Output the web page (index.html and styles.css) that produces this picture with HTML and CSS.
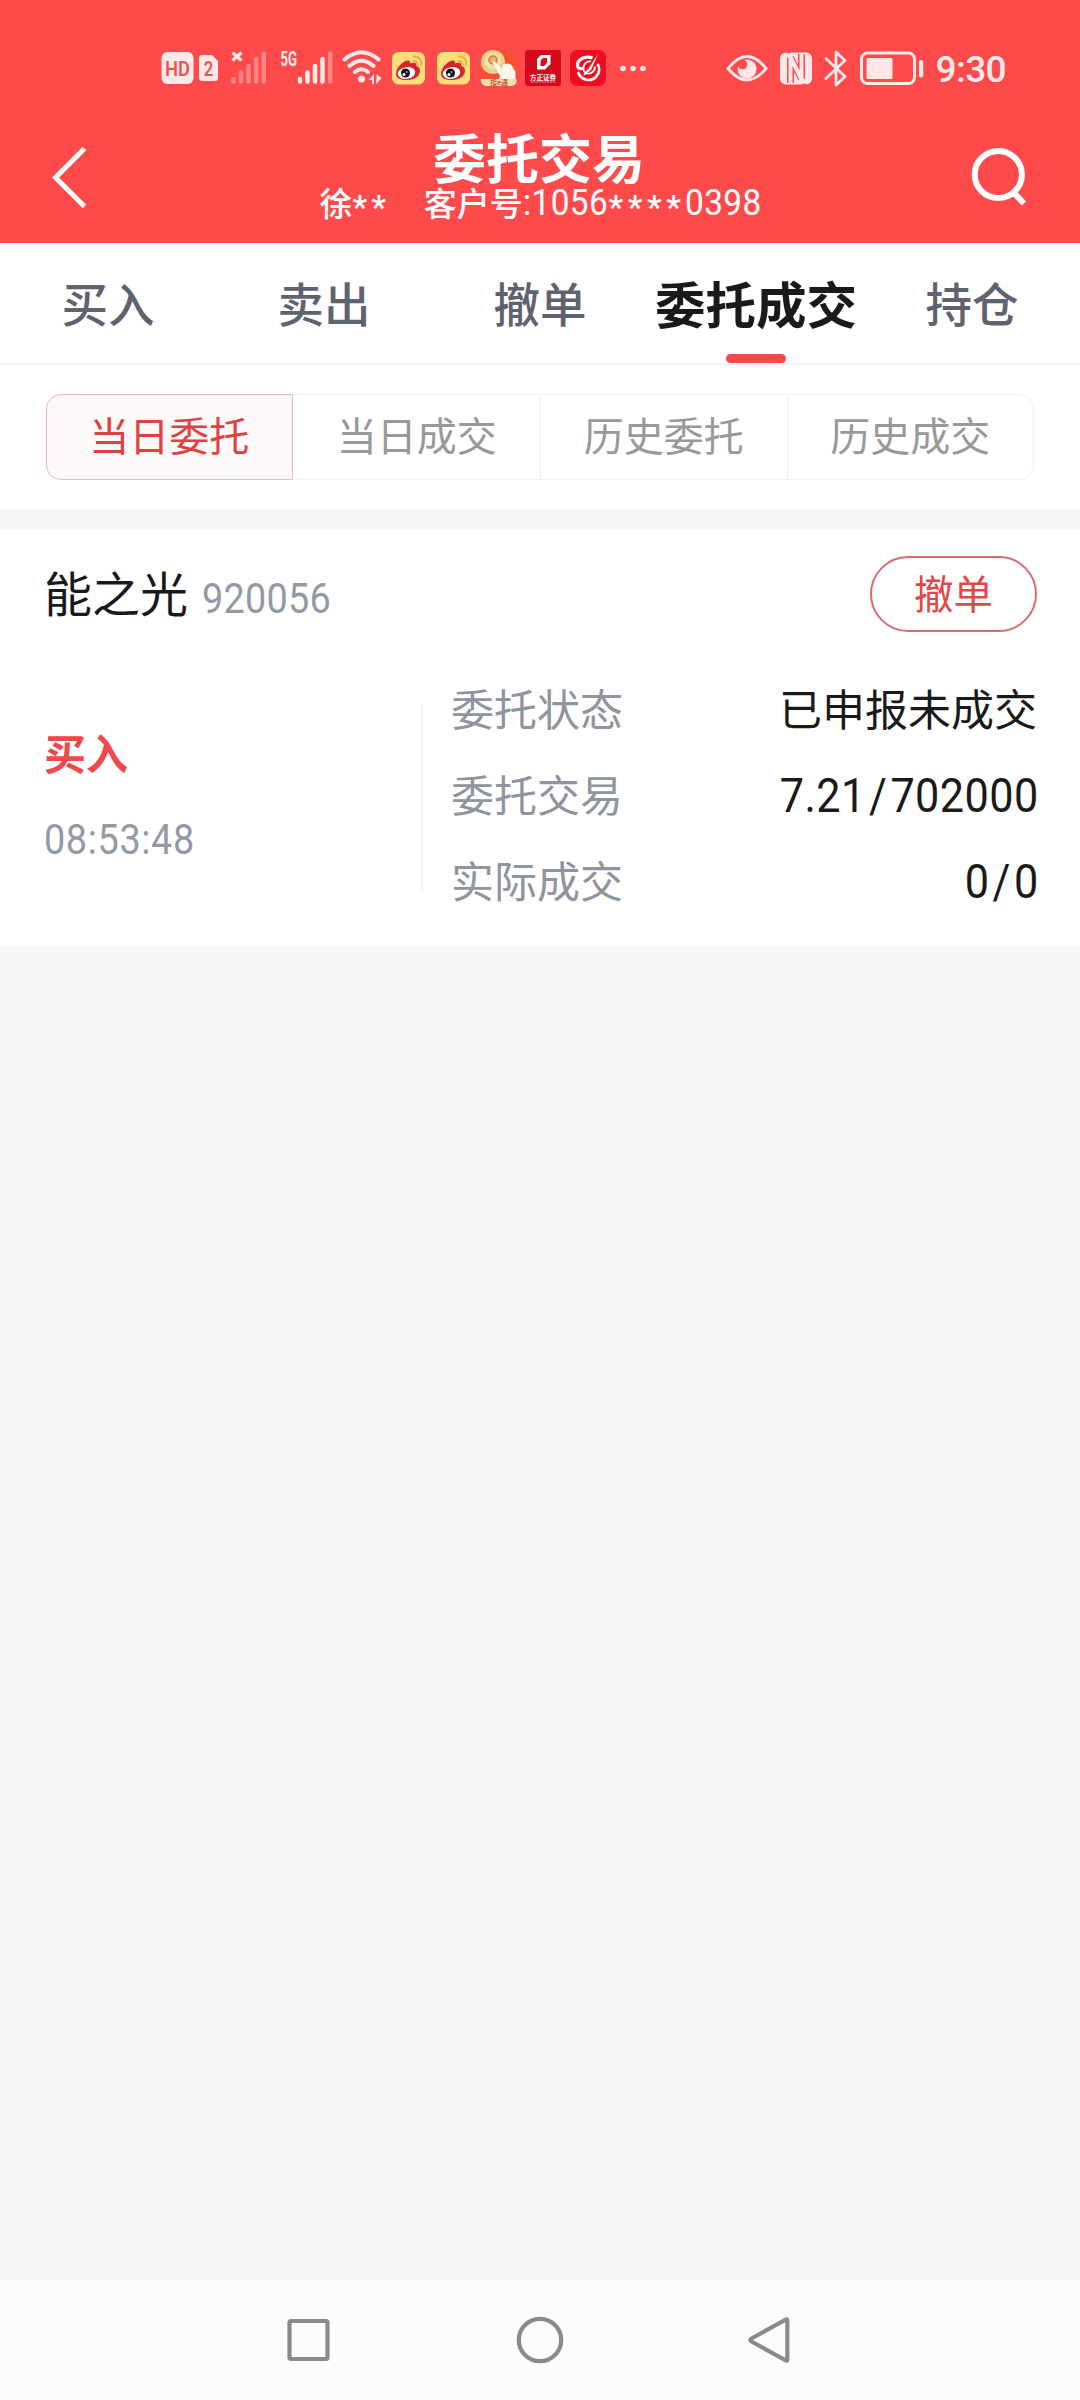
FILE: index.html
```html
<!DOCTYPE html>
<html lang="zh-CN">
<head>
<meta charset="utf-8">
<title>委托交易</title>
<link rel="stylesheet" href="styles.css">
</head>
<body>
<div class="screen">
  <header class="top">
    <div class="status">
      <div class="status-left">
        <svg width="58" height="40" viewBox="0 0 58 40">
          <rect x="1.5" y="4" width="32" height="32" rx="6" fill="#ffe9e8"/>
          <text x="17.5" y="27.5" class="svg-badge" font-size="21" textLength="25" lengthAdjust="spacingAndGlyphs">HD</text>
          <path d="M42 7h10l6 6v17a3 3 0 0 1-3 3H42a3 3 0 0 1-3-3V10a3 3 0 0 1 3-3z" fill="#ffe9e8"/>
          <text x="48.5" y="27.5" class="svg-badge" font-size="21" textLength="9.5" lengthAdjust="spacingAndGlyphs">2</text>
        </svg>
        <svg class="gap-signal" width="36" height="40" viewBox="0 0 36 40">
          <path d="M1.5 4.500l9 8M10.500 4.500l-9 8" stroke="#ffe9e8" stroke-width="3.200" fill="none"/>
          <g stroke="#ff8685" stroke-width="4.500" stroke-linecap="round"><path d="M2.500 31v2.500M10 24.500v9M17.500 18v15.500M25.200 11v22.500M32.800 5.500v28"/></g>
        </svg>
        <svg class="gap-signal" width="54" height="40" viewBox="0 0 54 40">
          <text x="0.500" y="17.500" class="svg-net" font-size="20" textLength="16.500" lengthAdjust="spacingAndGlyphs">5G</text>
          <g stroke="#ffe9e8" stroke-width="4.500" stroke-linecap="round"><path d="M20 31v2.500M27.500 24.500v9M35 18v15.500M42.500 11v22.500"/><path stroke="#ff8685" d="M50.200 5.500v28"/></g>
        </svg>
        <svg class="gap-wifi" width="40" height="40" viewBox="0 0 40 40">
          <g fill="none" stroke="#ffe9e8" stroke-width="4" stroke-linecap="round"><path d="M2.500 11.500q17-14.500 34 0M7.500 18q12-10.500 24 0M13 24q6.500-5.500 13 0"/></g>
          <circle cx="19.500" cy="31" r="3.500" fill="#ffe9e8"/>
          <path d="M26.500 32l5.500-6v10h-2v-4zM34.500 26v10l5-6z" fill="#ffe9e8"/>
        </svg>
        <svg class="gap-app1" width="33" height="40" viewBox="0 0 33 40"><use href="#weibo"/></svg>
        <svg class="gap-app2" width="33" height="40" viewBox="0 0 33 40">
          <g id="weibo">
            <rect x="0" y="4" width="33" height="32.500" rx="6.500" fill="#ffdf79"/>
            <path d="M4 26c0-6 7-13.500 12-13.500 2 0 2.500 1.500 2 3 4-1.500 7-1 6.500 2.500 2.500.8 3.500 2.500 3.500 4.500 0 6-6 9.500-12.500 9.500S4 30.500 4 26z" fill="#d8242c"/>
            <ellipse cx="14.500" cy="25" rx="8.800" ry="5.800" fill="#fff" transform="rotate(-8 14.500 25)"/>
            <circle cx="13.500" cy="25" r="4.500" fill="#111"/><circle cx="12" cy="26.500" r="1.500" fill="#fff"/><circle cx="14.700" cy="24" r=".8" fill="#fff"/>
            <path d="M21.500 8.500q8.500 0 8 9M21.500 13q4.500 0 4 4.500" fill="none" stroke="#ecae45" stroke-width="2" stroke-linecap="round"/>
          </g>
        </svg>
        <svg class="gap-app3" width="36" height="40" viewBox="0 0 36 40">
          <rect x="0" y="2" width="35.500" height="36" rx="6" fill="#f9512f"/>
          <circle cx="12" cy="14" r="12" fill="#e9cf8c"/><circle cx="12" cy="13" r="8.500" fill="#f3dfaa"/>
          <circle cx="12" cy="12" r="4" fill="#eab06d" stroke="#d87941" stroke-width="1.500"/>
          <path d="M11.500 14.500l2-1 8 8V17q4-3 9 0l4 7v8H18l1-4z" fill="#fff6ec"/>
          <path d="M0 31h35.500v2a5 5 0 0 1-5 5H5a5 5 0 0 1-5-5z" fill="#f8dfb3"/>
          <text x="18" y="37" text-anchor="middle" class="svg-zhi">指e通</text>
        </svg>
        <svg class="gap-app4" width="36" height="40" viewBox="0 0 36 40">
          <rect y="2" width="36" height="36" rx="3" fill="#d3091c"/>
          <path fill-rule="evenodd" d="M16 7h9.500v9l-5.500 5.500h-8V11zM18 10l-2.500 2.500V18H19l3-3v-5z" fill="#fff"/>
          <text x="18" y="32" text-anchor="middle" class="svg-fz">方正证券</text>
          <path d="M6 34h25" stroke="#f69aa2" stroke-width="1" stroke-dasharray="2 .7"/>
        </svg>
        <svg class="gap-app5" width="36" height="40" viewBox="0 0 36 40">
          <rect y="2" width="36" height="36" rx="7" fill="#ef0d22"/>
          <g fill="none" stroke="#fff"><path d="M22.500 10c-8-3-15 2-15 7 0 3 2 4 5 3.500" stroke-width="3.200"/><path d="M8 24c3 9 13 10 18 5 4-4 4-10 1.500-13" stroke-width="2.600"/><path d="M21 13.500c-6-.5-10 6-6 11 5 3 10-1 10-6M14 27l5-6" stroke-width="1.800"/></g>
          <path d="M28 6l-7 16-4 3 2-5z" fill="#fff"/>
        </svg>
        <svg class="gap-more" width="26" height="40" viewBox="0 0 26 40" fill="#ffe9e8"><circle cx="3" cy="20.500" r="2.800"/><circle cx="13" cy="20.500" r="2.800"/><circle cx="23" cy="20.500" r="2.800"/></svg>
      </div>
      <div class="status-right">
        <svg width="42" height="40" viewBox="0 0 42 40">
          <path d="M2 20.500q19-24 38 0-19 23-38 0z" fill="none" stroke="#ffe9e8" stroke-width="2.800"/>
          <circle cx="21" cy="21" r="9.500" fill="#ffe9e8"/><circle cx="16.500" cy="16.500" r="4.800" fill="#ff4a4b"/>
        </svg>
        <svg width="32" height="40" viewBox="0 0 32 40">
          <rect y="4.500" width="32" height="32" rx="6" fill="#ffe9e8"/>
          <path d="M10.500 35V10L21.500 30.500V6" fill="none" stroke="#ff4a4b" stroke-width="7"/>
          <path d="M6.500 4.500h4M22 36.500h4" stroke="#ff4a4b" stroke-width="1.500"/>
          <path d="M10.500 36V9L21.500 31.500V5" fill="none" stroke="#ffe9e8" stroke-width="4"/>
        </svg>
        <svg width="24" height="40" viewBox="0 0 24 40"><path d="M2 10.500l19 18-9 8.500V4l9 8.500-19 18" fill="none" stroke="#ffe9e8" stroke-width="2.800" stroke-linejoin="round" stroke-linecap="round"/></svg>
        <svg width="64" height="40" viewBox="0 0 64 40">
          <rect x="1.500" y="5" width="53" height="30.500" rx="6" fill="none" stroke="#ffe9e8" stroke-width="3"/>
          <rect x="6.500" y="10" width="26" height="21" rx="1.500" fill="#ffe9e8"/>
          <rect x="59" y="12" width="4.200" height="17.500" rx="2" fill="#ffe9e8"/>
        </svg>
        <span class="clock">9:30</span>
      </div>
    </div>
    <div class="titlebar">
      <svg width="40" height="64" viewBox="0 0 40 64"><path d="M34.500 2.500L5.500 31.500l29 29" fill="none" stroke="#fff" stroke-width="5"/></svg>
      <div class="titles">
        <h1>委托交易</h1>
        <p class="account"><span>徐</span><span class="stars">**</span><span class="client">客户号</span><span class="num">:1056</span><span class="stars">****</span><span class="num">0398</span></p>
      </div>
      <svg width="58" height="60" viewBox="0 0 58 60"><circle cx="28.300" cy="28.500" r="23.600" fill="none" stroke="#fff" stroke-width="6"/><path d="M43.500 46.500L54 57.500" stroke="#fff" stroke-width="6"/></svg>
    </div>
  </header>

  <nav class="tabs">
    <a>买入</a><a>卖出</a><a>撤单</a><a class="active">委托成交</a><a>持仓</a>
  </nav>

  <div class="filters">
    <div class="segmented"><a class="selected">当日委托</a><a>当日成交</a><a>历史委托</a><a>历史成交</a></div>
  </div>

  <section class="order">
    <div class="order-head">
      <h2>能之光</h2><span class="code">920056</span>
      <button class="cancel">撤单</button>
    </div>
    <div class="order-body">
      <div class="side"><strong>买入</strong><span class="time">08:53:48</span></div>
      <div class="divider"></div>
      <dl class="details">
        <dt>委托状态</dt><dd>已申报未成交</dd>
        <dt>委托交易</dt><dd class="figure">7.21<i>/</i>702000</dd>
        <dt>实际成交</dt><dd class="figure">0<i>/</i>0</dd>
      </dl>
    </div>
  </section>

  <main class="blank"></main>

  <footer class="navkeys">
    <svg width="44" height="50" viewBox="0 0 44 50"><rect x="2.500" y="6" width="38" height="38" rx="1.500"/></svg>
    <svg width="50" height="50" viewBox="0 0 50 50"><circle cx="25" cy="25" r="21.200"/></svg>
    <svg width="44" height="50" viewBox="0 0 44 50"><path d="M38 4.500q1.300-.8 1.300 1v39q0 1.800-1.300 1L3.500 26.500q-2.500-1.500 0-3z"/></svg>
  </footer>
</div>
</body>
</html>
```
FILE: styles.css
```css
* { box-sizing: border-box; margin: 0; padding: 0; }
body { width: 1080px; background: #f7f8fa; font-family: "Noto Sans CJK SC", sans-serif; }
svg { display: block; flex: none; }
i { font-style: normal; }
.screen { display: flex; flex-direction: column; height: 2400px; }

.top { height: 243px; background: #ff4a4b; color: #fff; }
.status { display: flex; justify-content: space-between; height: 110px; padding: 48px 74px 0 160px; }
.status-left, .status-right { display: flex; height: 40px; align-items: center; }
.status-right { gap: 12px; }
.gap-signal { margin-left: 13px; }
.gap-wifi { margin-left: 8px; }
.gap-app1 { margin-left: 9.500px; }
.gap-app2 { margin-left: 12px; }
.gap-app3 { margin-left: 11px; }
.gap-app4, .gap-app5 { margin-left: 8.500px; }
.gap-more { margin-left: 14px; }
.svg-badge { font-family: Roboto, sans-serif; font-weight: 600; fill: #e85555; text-anchor: middle; }
.svg-net { font-family: Roboto, sans-serif; font-weight: 700; fill: #ffe9e8; }
.svg-zhi { font-family: "Noto Sans CJK SC", sans-serif; font-size: 7px; font-weight: 700; fill: #c0603a; }
.svg-fz { font-family: "Noto Sans CJK SC", sans-serif; font-size: 6.500px; font-weight: 700; fill: #fff; }
.clock { font: 500 37px/40px Roboto, sans-serif; color: #ffe9e8; letter-spacing: -0.600px; padding-top: 3px; }

.titlebar { display: grid; grid-template-columns: 1fr auto 1fr; padding: 0 52px 0 50px; }
.titlebar > svg { margin-top: 36px; }
.titlebar > svg:last-child { justify-self: end; }
.titles { text-align: center; }
.titles h1 { margin-top: 18px; font-size: 53px; line-height: 56px; font-weight: 700; }
.account { display: flex; height: 34px; font-size: 33px; line-height: 34px; margin-top: 1px; padding-left: 3px; font-weight: 500; }
.client { margin-left: 33px; }
.num { font: 400 37px/36px Roboto, sans-serif; letter-spacing: 0.500px; transform: scaleX(0.9); transform-origin: left; margin-right: -9px; }
.stars { font: 500 33px/34px Roboto, sans-serif; letter-spacing: 4.600px; padding-top: 6px; }

.tabs { display: grid; grid-template-columns: repeat(5, 1fr); height: 122px; border-bottom: 2px solid #f5f5f6; background: #fff; color: #5f636d; font-size: 46.500px; font-weight: 500; text-align: center; line-height: 118px; }
.tabs a { display: flex; flex-direction: column; align-items: center; height: 120px; white-space: nowrap; }
.tabs .active { color: #1a1a1a; font-size: 50.500px; font-weight: 700; }
.tabs .active::after { content: ""; width: 60px; height: 9px; margin-top: -7px; border-radius: 5px; background: #fc484b; flex: none; }

.filters { height: 164px; padding: 29px 46px 0; background: #fff; border-bottom: 20px solid #f7f7f7; }
.segmented { display: grid; grid-template-columns: repeat(4, 1fr); height: 86px; border: 1px solid #eef0f0; border-radius: 15px; color: #999; font-size: 40px; line-height: 79px; text-align: center; }
.segmented a + a + a { border-left: 1px solid #eef0f0; }
.segmented .selected { margin: -1px 1px -1px -1px; border: 1px solid #f0b5c4; border-radius: 15px 0 0 15px; background: #fef9f9; color: #e0403f; }

.order { height: 417px; padding: 27px 43px 0 44px; background: #fff; }
.order-head { display: flex; align-items: center; height: 76px; }
.order-head h2 { font-size: 48px; line-height: 72px; margin-bottom: 7px; font-weight: 400; color: #1a1a1a; }
.code { margin: 9px 0 0 14px; font: 400 42px/60px Roboto, sans-serif; letter-spacing: 0.300px; transform: scaleX(0.9); transform-origin: left; color: #929aa3; }
.cancel { width: 167px; height: 76px; margin-left: auto; border: 2px solid #dc6a6d; border-radius: 38px; background: none; color: #e34848; font: 400 39.500px/68px "Noto Sans CJK SC", sans-serif; padding-bottom: 4px; }
.order-body { display: flex; height: 258px; margin-top: 35px; }
.side { display: flex; flex-direction: column; width: 377px; padding-top: 55px; }
.side strong { font-size: 42px; line-height: 60px; color: #f0494d; }
.time { margin-top: 28px; font: 400 42px/60px Roboto, sans-serif; letter-spacing: 0.700px; transform: scaleX(0.9); transform-origin: left; color: #929aa3; }
.divider { width: 2px; height: 186px; margin-top: 37px; background: #f3f3f4; }
.details { display: grid; grid-template-columns: 1fr auto; flex: 1; grid-auto-rows: 86px; padding-left: 28px; font-size: 43px; line-height: 81px; }
.details dt { color: #8e959e; }
.details dd { color: #1a1a1a; text-align: right; }
.details .figure { font-family: Roboto, sans-serif; font-size: 48px; line-height: 86px; letter-spacing: 0.500px; margin-right: -2px; transform: scaleX(0.9); transform-origin: right; }
.figure i { margin: 0 3.500px; }

.blank { flex: 1; background: #f7f8fa; }
.navkeys { display: flex; justify-content: space-between; align-items: center; height: 119px; padding: 0 288px 2px 287px; background: #fcfcfc; }
.navkeys svg { fill: none; stroke: #8a8a8a; stroke-width: 4.200px; stroke-linejoin: round; }
```
